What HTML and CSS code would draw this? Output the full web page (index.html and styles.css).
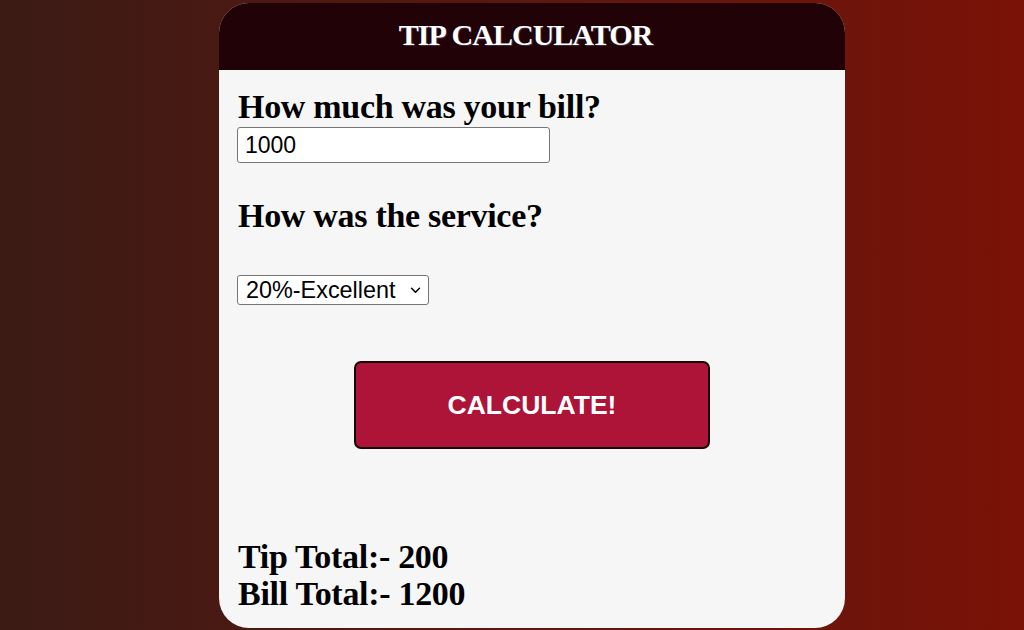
FILE: index.html
```html
<!DOCTYPE html>
<html lang="en">
<head>
<meta charset="utf-8">
<title>Tip Calculator</title>
<link rel="stylesheet" href="styles.css">
</head>
<body>
<div class="card">
  <header class="card-header">
    <h1 class="title">TIP CALCULATOR</h1>
  </header>
  <div class="card-body">
    <h2 class="question q-bill">How much was your bill?</h2>
    <input class="bill-input" type="text" value="1000">
    <h2 class="question q-service">How was the service?</h2>
    <select class="service-select">
      <option>20%-Excellent</option>
      <option>15%-Good</option>
      <option>10%-Okay</option>
      <option>5%-Bad</option>
    </select>
    <div class="btn-row">
      <button class="calc-btn" type="button">CALCULATE!</button>
    </div>
    <div class="results">
      <div class="result-line">Tip Total:- 200</div>
      <div class="result-line">Bill Total:- 1200</div>
    </div>
  </div>
</div>
</body>
</html>
```

FILE: styles.css
```css
html, body {
  margin: 0;
  padding: 0;
  height: 100%;
}
body {
  background: linear-gradient(to right, #3b1b15 0%, #5a1810 50%, #7a1207 100%);
  font-family: "Liberation Serif", "Times New Roman", serif;
  overflow: hidden;
}
.card {
  margin: 3px 0 0 219px;
  width: 626px;
  height: 625px;
  border-radius: 30px;
  overflow: hidden;
  background: #f6f6f6;
  display: flex;
  flex-direction: column;
}
.card-header {
  height: 67px;
  padding-right: 13px;
  background: #200207;
  display: flex;
  align-items: center;
  justify-content: center;
}
.title {
  margin: 0 0 3px 0;
  font-size: 30px;
  line-height: 32px;
  letter-spacing: -1px;
  word-spacing: 1px;
  font-weight: bold;
  color: #ffffff;
  text-shadow: 1px 1px 1px rgba(120, 120, 150, 0.4);
}
.card-body {
  padding: 0 19px 0 19px;
  display: flex;
  flex-direction: column;
  align-items: flex-start;
}
.question {
  margin: 0;
  font-size: 34px;
  line-height: 37px;
  letter-spacing: -0.3px;
  font-weight: bold;
  color: #000;
}
.q-bill {
  margin-top: 18px;
}
.bill-input {
  margin: 2px 0 0 -1px;
  box-sizing: border-box;
  width: 313px;
  height: 36px;
  border: 1px solid #767676;
  border-radius: 3px;
  padding: 0 7px;
  font-family: "Liberation Sans", Arial, sans-serif;
  font-size: 23px;
  color: #000;
  background: #fff;
}
.q-service {
  margin-top: 34px;
}
.service-select {
  margin: 41px 0 0 -1px;
  box-sizing: border-box;
  width: 192px;
  height: 30px;
  padding: 0 0 0 8px;
  font-family: "Liberation Sans", Arial, sans-serif;
  font-size: 23.4px;
  color: #000;
  border: 1px solid #767676;
  border-radius: 3px;
  -webkit-appearance: none;
  appearance: none;
  background-color: #fff;
  background-image: url("data:image/svg+xml;utf8,<svg xmlns='http://www.w3.org/2000/svg' width='12' height='8' viewBox='0 0 12 8'><path d='M1.5 1.5 L6 6 L10.5 1.5' fill='none' stroke='%23000' stroke-width='1.7' stroke-linecap='round' stroke-linejoin='round'/></svg>");
  background-repeat: no-repeat;
  background-position: right 7px center;
  background-size: 11px 7px;
}
.btn-row {
  align-self: stretch;
  display: flex;
  justify-content: center;
  margin-top: 56px;
}
.calc-btn {
  box-sizing: border-box;
  width: 356px;
  height: 88px;
  background: #ae1338;
  border: 2px solid #160606;
  border-radius: 7px;
  color: #fff;
  font-family: "Liberation Sans", Arial, sans-serif;
  font-size: 26.5px;
  font-weight: bold;
  cursor: pointer;
}
.results {
  margin-top: 89px;
}
.result-line {
  font-size: 34px;
  line-height: 37px;
  letter-spacing: -0.3px;
  font-weight: bold;
  color: #000;
}
```
